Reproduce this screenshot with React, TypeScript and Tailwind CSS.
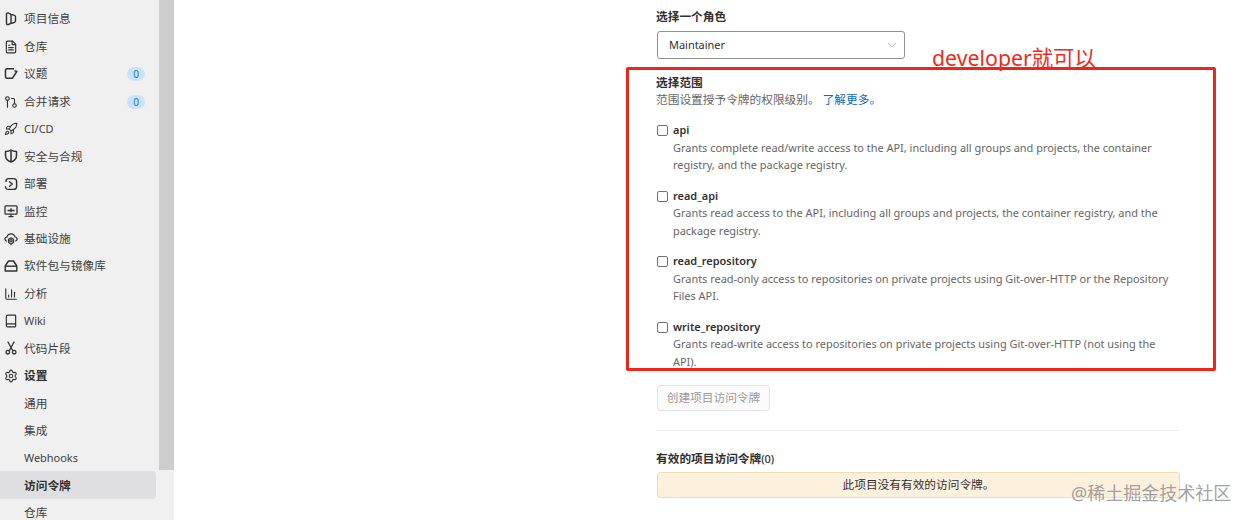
import type { ReactNode } from 'react';
import { Book, ChartColumn, ChevronDown, FileText, GitPullRequest, Rocket, Settings } from 'lucide-react';

const FONT = "font-['Noto_Sans','Noto_Sans_CJK_SC',sans-serif]";

function ProjectIcon() {
  return (
    <svg width="14" height="14" viewBox="0 0 14 14" fill="none" stroke="currentColor" strokeWidth="1.400">
      <path d="M7 2.400 4.300 1C3.200.7 2.500 1.300 2.500 2.300v8.900c0 1 .7 1.700 1.800 1.300L7 11.400c2.200-.5 4.500-.9 4.500-2.200V4.700C11.500 3.400 9.200 2.900 7 2.400Z" strokeLinejoin="round" />
      <path d="M7 2.400v9" />
    </svg>
  );
}

function IssueIcon() {
  return (
    <svg width="14" height="14" viewBox="0 0 14 14" fill="none" stroke="currentColor" strokeWidth="1.500">
      <path d="M10 1.800H3C2 1.800 1.500 2.300 1.500 3.300v6.400c0 1 .5 1.500 1.500 1.500h5.500L12.800 4.500 10.500 3.800" strokeLinejoin="round" />
    </svg>
  );
}

function ShieldIcon() {
  return (
    <svg width="14" height="14" viewBox="0 0 14 14" fill="none" stroke="currentColor" strokeWidth="1.500">
      <path d="M7 1C5.500 2 3.500 2.500 1.500 2.500v4C1.500 9.500 4 12 7 13c3-1 5.500-3.500 5.500-6.500v-4C10.500 2.500 8.500 2 7 1Z" strokeLinejoin="round" />
      <path d="M7 1.500v11" />
    </svg>
  );
}

function DeployIcon() {
  return (
    <svg width="14" height="14" viewBox="0 0 14 14" fill="none" stroke="currentColor" strokeWidth="1.400">
      <path d="M2 4.500V4a2.400 2.400 0 0 1 2.400-2.400h5.200A3 3 0 0 1 12.600 4.600v4.800a3 3 0 0 1-3 3H4.400" strokeLinecap="round" />
      <path d="M5.500 4.800 8.300 7 5.500 9.200" strokeLinecap="round" strokeLinejoin="round" />
      <path d="M1.500 9.800c.2 1.200.8 2 1.800 2.500" strokeLinecap="round" />
    </svg>
  );
}

function MonitorIcon() {
  return (
    <svg width="14" height="14" viewBox="0 0 14 14" fill="none" stroke="currentColor" strokeWidth="1.300">
      <rect x="1" y="1.800" width="12" height="8.400" rx="1" />
      <path d="M3.500 6.500h7M7 4.300v4M7 10.200v2.300M4.500 12.700h5" />
    </svg>
  );
}

function InfraIcon() {
  return (
    <svg width="14" height="14" viewBox="0 0 14 14" fill="none" stroke="currentColor" strokeWidth="1.200">
      <path d="M2.800 9.200C1.400 8.700.7 7.700 1 6.500c.3-1 1.100-1.500 2-1.500C3.500 3 5.200 1.800 7 1.800S10.500 3 11 5c.9 0 1.700.5 2 1.500.3 1.200-.4 2.200-1.800 2.700" />
      <circle cx="7" cy="8.800" r="1.200" />
      <path d="M7 5.800 9.500 7.300V10.300L7 12.400 4.500 10.300V7.300Z" strokeLinejoin="round" />
    </svg>
  );
}

function PackageIcon() {
  return (
    <svg width="14" height="14" viewBox="0 0 14 14" fill="none" stroke="currentColor" strokeWidth="1.400">
      <path d="M4.500 2h5l3.300 5v5H1.200V7Z" strokeLinejoin="round" />
      <path d="M1.200 7.200h11.600" />
    </svg>
  );
}

function SnippetIcon() {
  return (
    <svg width="14" height="14" viewBox="0 0 14 14" fill="none" stroke="currentColor" strokeWidth="1.300">
      <path d="M4 1 8.600 9.500M10 1 5.400 9.500" strokeLinecap="round" />
      <circle cx="3.800" cy="11.200" r="1.800" />
      <circle cx="10.200" cy="11.200" r="1.800" />
    </svg>
  );
}

type NavItem = { label: string; icon?: ReactNode; badge?: boolean; bold?: boolean; active?: boolean; latin?: boolean };

const navItems: NavItem[] = [
  { label: '项目信息', icon: <ProjectIcon /> },
  { label: '仓库', icon: <FileText size={14} strokeWidth={2} /> },
  { label: '议题', icon: <IssueIcon />, badge: true },
  { label: '合并请求', icon: <GitPullRequest size={14} strokeWidth={1.9} />, badge: true },
  { label: 'CI/CD', icon: <Rocket size={14} strokeWidth={1.8} />, latin: true },
  { label: '安全与合规', icon: <ShieldIcon /> },
  { label: '部署', icon: <DeployIcon /> },
  { label: '监控', icon: <MonitorIcon /> },
  { label: '基础设施', icon: <InfraIcon /> },
  { label: '软件包与镜像库', icon: <PackageIcon /> },
  { label: '分析', icon: <ChartColumn size={14} strokeWidth={1.9} /> },
  { label: 'Wiki', icon: <Book size={14} strokeWidth={2} />, latin: true },
  { label: '代码片段', icon: <SnippetIcon /> },
  { label: '设置', icon: <Settings size={14} strokeWidth={1.9} />, bold: true },
  { label: '通用' },
  { label: '集成' },
  { label: 'Webhooks', latin: true },
  { label: '访问令牌', bold: true, active: true },
  { label: '仓库' },
];

const scopes = [
  {
    name: 'api',
    lines: ['Grants complete read/write access to the API, including all groups and projects, the container', 'registry, and the package registry.'],
  },
  {
    name: 'read_api',
    lines: ['Grants read access to the API, including all groups and projects, the container registry, and the', 'package registry.'],
  },
  {
    name: 'read_repository',
    lines: ['Grants read-only access to repositories on private projects using Git-over-HTTP or the Repository', 'Files API.'],
  },
  {
    name: 'write_repository',
    lines: ['Grants read-write access to repositories on private projects using Git-over-HTTP (not using the', 'API).'],
  },
];

function Sidebar() {
  return (
    <aside className="relative w-[174px] h-[520px] shrink-0 bg-[#f0f0f0] overflow-hidden pt-[5px]">
      {navItems.map((item, i) => (
        <div
          key={i}
          className={`flex items-center h-[27.440px] w-[156px] pt-[1px] pr-[11px] rounded-r-[4px] ${item.latin ? 'text-[10.950px]' : 'text-[11.700px]'} ${item.active ? 'bg-[#dfdfe2]' : ''} ${item.bold ? 'font-semibold text-[#303030]' : 'text-[#3f3f3f]'}`}
        >
          <span className="w-[24px] pl-[4px] shrink-0 flex items-center text-[#303030]">{item.icon}</span>
          <span className="flex-1 whitespace-nowrap">{item.label}</span>
          {item.badge && (
            <span className="w-[18px] h-[14px] rounded-full bg-[#cbe2f9] text-[#1f75cb] text-[10px] leading-[14px] text-center">0</span>
          )}
        </div>
      ))}
      {/* scrollbar thumb */}
      <div className="absolute top-0 left-[159px] w-[15px] h-[470px] bg-[#cdcdcd]" />
    </aside>
  );
}

function Scope({ name, lines }: { name: string; lines: string[] }) {
  return (
    <div className="flex h-[65.600px]">
      <span className="w-[11px] h-[11px] mt-[5px] ml-[1px] mr-[5px] shrink-0 rounded-[2px] border-[1.500px] border-[#707070] bg-white" />
      <div>
        <div className="pt-[1px] text-[10.950px] leading-[17.700px] font-semibold text-[#303030]">{name}</div>
        {lines.map((line) => (
          <div key={line} className="text-[10.950px] leading-[17.500px] text-[#666666] whitespace-nowrap">{line}</div>
        ))}
      </div>
    </div>
  );
}

export default function App() {
  return (
    <div className={`relative flex w-[1248px] h-[520px] overflow-hidden bg-white ${FONT}`}>
      <Sidebar />
      <main className="ml-[482px] w-[524px] pt-[7px]">
        <div className="text-[11.700px] leading-[18px] font-semibold text-[#303030]">选择一个角色</div>
        <div className="mt-[6px] ml-[1px] w-[248px] h-[28px] flex items-center justify-between pl-[11px] pr-[5px] rounded-[3px] border border-[#919191] text-[10.950px] text-[#303030]">
          Maintainer
          <ChevronDown size={14} strokeWidth={1.5} className="text-[#a0a0a0]" />
        </div>
        <div className="mt-[14px] text-[11.700px] leading-[18px] font-semibold text-[#303030]">选择范围</div>
        <div className="text-[11.700px] leading-[17px] text-[#666666]">
          范围设置授予令牌的权限级别。<span className="ml-[3px] text-[#1068bf]">了解更多。</span>
        </div>
        <div className="mt-[12px] h-[263px]">
          {scopes.map((s) => (
            <Scope key={s.name} name={s.name} lines={s.lines} />
          ))}
        </div>
        <button className="mt-[2px] ml-[1px] block w-[113px] h-[26px] rounded-[3px] border border-[#e3e3e3] bg-[#fafafa] text-[11.700px] text-[#9a9a9a]">创建项目访问令牌</button>
        <div className="mt-[19px] h-px bg-[#ececec]" />
        <div className="mt-[18px] text-[11.700px] leading-[18px] font-semibold text-[#303030]">
          有效的项目访问令牌<span className="text-[10.950px] font-medium">(0)</span>
        </div>
        <div className="mt-[4px] ml-[1px] h-[26px] flex items-center justify-center rounded-[3px] border border-[#efdcb5] bg-[#fdf1dd] text-[11.700px] text-[#303030]">
          此项目没有有效的访问令牌。
        </div>
      </main>
      {/* annotation over the page */}
      <div className="absolute left-[626px] top-[67px] w-[590px] h-[304px] rounded-[2px] border-[3px] border-[#ee2518]" />
      <div className="absolute left-[932px] top-[43px] text-[21.300px] leading-[30px] text-[#ee2b1c] whitespace-nowrap">developer就可以</div>
      <div className="absolute left-[1071px] top-[481px] text-[18px] leading-[24px] text-[#8a8a8a]/80 whitespace-nowrap">@稀土掘金技术社区</div>
    </div>
  );
}
